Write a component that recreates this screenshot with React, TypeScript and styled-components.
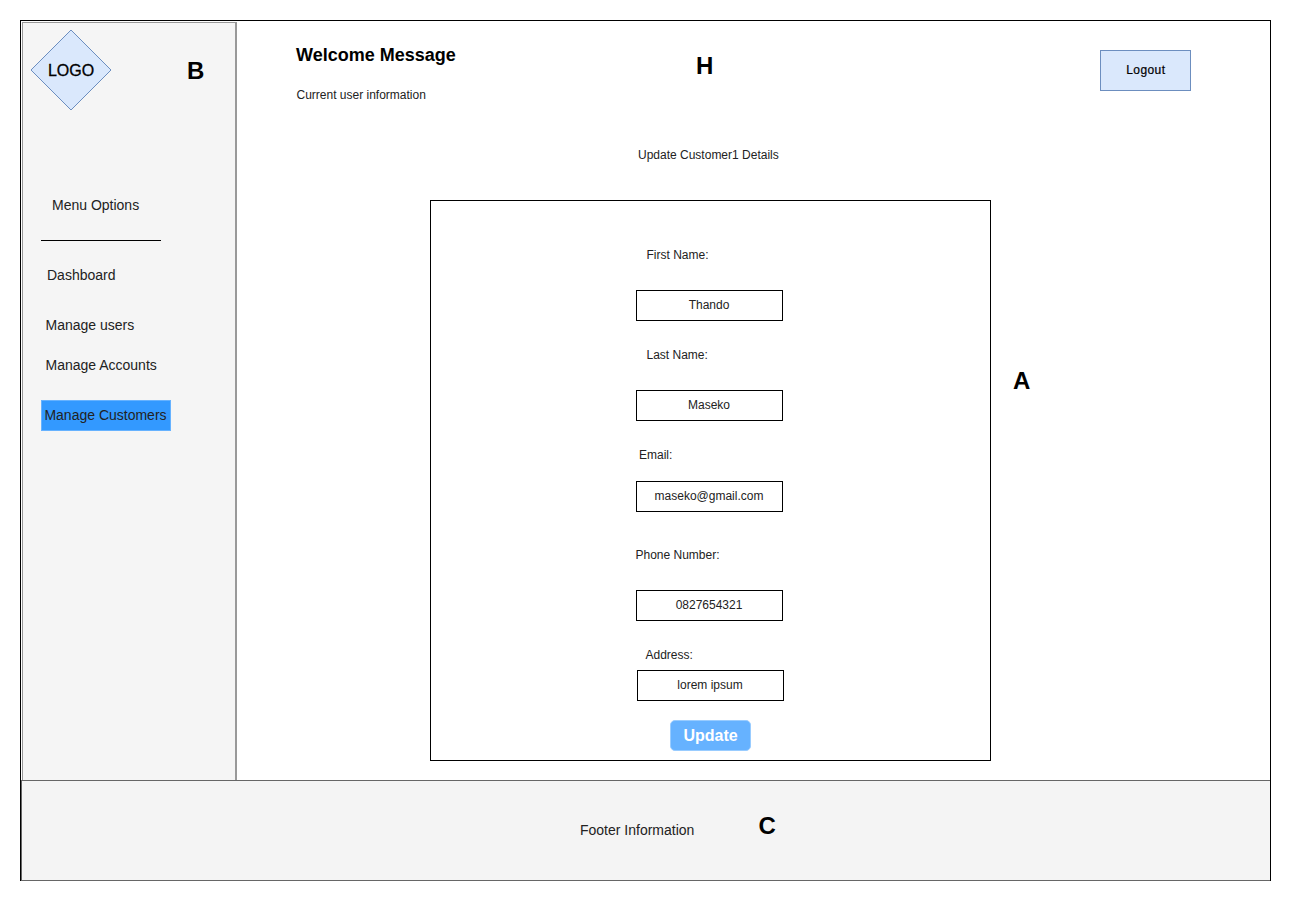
import styled, { createGlobalStyle } from "styled-components";

const GlobalStyle = createGlobalStyle`
  html, body {
    margin: 0;
    padding: 0;
    background: #ffffff;
  }
  body {
    font-family: "Liberation Sans", Arial, sans-serif;
    color: #222222;
  }
`;

const fields = [
  { label: "First Name:", value: "Thando", labelLeft: 10.5, top: 46, gap: 27, inputLeft: 0 },
  { label: "Last Name:", value: "Maseko", labelLeft: 10.5, top: 26, gap: 27, inputLeft: 0 },
  { label: "Email:", value: "maseko@gmail.com", labelLeft: 3, top: 26, gap: 18, inputLeft: 0 },
  { label: "Phone Number:", value: "0827654321", labelLeft: -0.5, top: 35, gap: 27, inputLeft: 0 },
  { label: "Address:", value: "lorem ipsum", labelLeft: 9.5, top: 26, gap: 7, inputLeft: 1 },
];

const menuItems = [
  { label: "Dashboard", left: 24, top: 26 },
  { label: "Manage users", left: 22.5, top: 34 },
  { label: "Manage Accounts", left: 22.5, top: 24 },
];

const App = () => {
  return (
    <>
      <GlobalStyle />
      <Page>
        <Frame>
          <Body>
            <Sidebar>
              <BrandRow>
                <Logo>
                  <svg width="82" height="82" viewBox="0 0 82 82">
                    <polygon
                      points="41,1 81,41 41,81 1,41"
                      fill="#dae8fc"
                      stroke="#6c8ebf"
                      strokeWidth="1"
                    />
                  </svg>
                  <LogoText>LOGO</LogoText>
                </Logo>
                <BigLetter $left={75} $top={2}>B</BigLetter>
              </BrandRow>
              <MenuTitle>Menu Options</MenuTitle>
              <Divider />
              {menuItems.map((item) => (
                <MenuItem key={item.label} $left={item.left} $top={item.top}>
                  {item.label}
                </MenuItem>
              ))}
              <ActiveItem>Manage Customers</ActiveItem>
            </Sidebar>

            <Main>
              <Header>
                <UserInfo>
                  <Welcome>Welcome Message</Welcome>
                  <CurrentUser>Current user information</CurrentUser>
                </UserInfo>
                <BigLetter $left={240} $top={31}>H</BigLetter>
                <LogoutButton>Logout</LogoutButton>
              </Header>

              <PageTitle>Update Customer1 Details</PageTitle>

              <FormRow>
                <FormBox>
                  {fields.map((field) => (
                    <Field key={field.label} $top={field.top}>
                      <FieldLabel $left={field.labelLeft}>{field.label}</FieldLabel>
                      <FieldInput $top={field.gap} $left={field.inputLeft}>
                        {field.value}
                      </FieldInput>
                    </Field>
                  ))}
                  <UpdateButton>Update</UpdateButton>
                </FormBox>
                <BigLetter $left={22} $top={167}>A</BigLetter>
              </FormRow>
            </Main>
          </Body>

          <Footer>
            <FooterText>Footer Information</FooterText>
            <BigLetter $left={64} $top={-8}>C</BigLetter>
          </Footer>
        </Frame>
      </Page>
    </>
  );
};

export default App;

/* Styled Components */
const Page = styled.div`
  width: 1291px;
  height: 902px;
  padding: 20px 0 0 20px;
  box-sizing: border-box;
  overflow: hidden;
`;

const Frame = styled.div`
  width: 1251px;
  height: 861px;
  box-sizing: border-box;
  border: 1px solid #000000;
  border-bottom: none;
  display: flex;
  flex-direction: column;
`;

const Body = styled.div`
  height: 759px;
  display: flex;
`;

const Sidebar = styled.aside`
  width: 215px;
  height: 759px;
  margin-left: 1px;
  margin-top: 1px;
  box-sizing: border-box;
  background: #f5f5f5;
  border: 1px solid #999999;
  border-bottom: none;
  border-right: 2px solid #999999;
  display: flex;
  flex-direction: column;
  align-items: flex-start;
  font-size: 14px;
`;

const BrandRow = styled.div`
  display: flex;
  align-items: center;
  padding: 6px 0 0 7px;
  height: 82px;
`;

const Logo = styled.div`
  position: relative;
  width: 82px;
  height: 82px;
  flex-shrink: 0;
  svg {
    display: block;
  }
`;

const LogoText = styled.span`
  position: absolute;
  inset: 0;
  padding-top: 2px;
  box-sizing: border-box;
  display: flex;
  align-items: center;
  justify-content: center;
  font-size: 16px;
  color: #000000;
  -webkit-text-stroke: 0.3px #000000;
`;

const BigLetter = styled.div<{ $left: number; $top?: number }>`
  margin-left: ${({ $left }) => $left}px;
  margin-top: ${({ $top }) => $top ?? 0}px;
  font-size: 24px;
  line-height: 28px;
  font-weight: bold;
  color: #000000;
  flex-shrink: 0;
`;

const MenuTitle = styled.div`
  margin: 86px 0 0 29px;
  line-height: 16px;
`;

const Divider = styled.div`
  width: 120px;
  height: 1px;
  margin: 27px 0 0 18px;
  background: #000000;
`;

const MenuItem = styled.div<{ $left: number; $top: number }>`
  margin-left: ${({ $left }) => $left}px;
  margin-top: ${({ $top }) => $top}px;
  line-height: 16px;
`;

const ActiveItem = styled.div`
  width: 130px;
  height: 31px;
  margin: 27px 0 0 18px;
  padding: 0 1px 2px 0;
  box-sizing: border-box;
  background: #3399ff;
  border: 1px solid #66b2ff;
  display: flex;
  align-items: center;
  justify-content: center;
  white-space: nowrap;
`;

const Main = styled.main`
  flex: 1;
  min-width: 0;
  display: flex;
  flex-direction: column;
`;

const Header = styled.header`
  height: 83px;
  display: flex;
  align-items: flex-start;
  padding-left: 59px;
`;

const UserInfo = styled.div`
  width: 160px;
  padding-top: 23px;
  flex-shrink: 0;
`;

const Welcome = styled.div`
  font-size: 18px;
  line-height: 22px;
  font-weight: bold;
  color: #000000;
  white-space: nowrap;
`;

const CurrentUser = styled.div`
  margin: 22px 0 0 0.5px;
  font-size: 12px;
  line-height: 14px;
  white-space: nowrap;
`;

const LogoutButton = styled.button`
  margin: 29px 0 0 387px;
  width: 91px;
  height: 41px;
  padding: 0 0 2px;
  box-sizing: border-box;
  background: #dae8fc;
  border: 1px solid #6c8ebf;
  border-radius: 0;
  font-family: inherit;
  font-size: 12px;
  letter-spacing: 0.4px;
  color: #000000;
  -webkit-text-stroke: 0.2px #000000;
`;

const PageTitle = styled.div`
  margin: 44px 0 0 401px;
  font-size: 12px;
  line-height: 14px;
  white-space: nowrap;
`;

const FormRow = styled.div`
  display: flex;
  align-items: flex-start;
  margin: 38px 0 0 193px;
`;

const FormBox = styled.div`
  width: 561px;
  height: 561px;
  box-sizing: border-box;
  border: 1px solid #000000;
  padding-left: 205px;
  flex-shrink: 0;
`;

const Field = styled.div<{ $top: number }>`
  margin-top: ${({ $top }) => $top}px;
`;

const FieldLabel = styled.div<{ $left: number }>`
  margin-left: ${({ $left }) => $left}px;
  font-size: 12px;
  line-height: 16px;
  white-space: nowrap;
`;

const FieldInput = styled.div<{ $top: number; $left: number }>`
  margin-top: ${({ $top }) => $top}px;
  margin-left: ${({ $left }) => $left}px;
  width: 147px;
  height: 31px;
  padding: 0 1px 2px 0;
  box-sizing: border-box;
  border: 1px solid #000000;
  display: flex;
  align-items: center;
  justify-content: center;
  font-size: 12px;
`;

const UpdateButton = styled.button`
  display: block;
  margin: 19px 0 0 34px;
  width: 81px;
  height: 31px;
  padding: 0;
  box-sizing: border-box;
  background: #66b2ff;
  border: 1px solid #99ccff;
  border-radius: 5px;
  font-family: inherit;
  font-size: 16px;
  font-weight: bold;
  color: #ffffff;
`;

const Footer = styled.footer`
  height: 101px;
  padding: 0 0 2px 558px;
  box-sizing: border-box;
  background: #f4f4f4;
  border-top: 1px solid #666666;
  border-bottom: 1px solid #666666;
  border-left: 1px solid #666666;
  display: flex;
  align-items: center;
`;

const FooterText = styled.div`
  font-size: 14px;
  line-height: 16px;
  white-space: nowrap;
`;
